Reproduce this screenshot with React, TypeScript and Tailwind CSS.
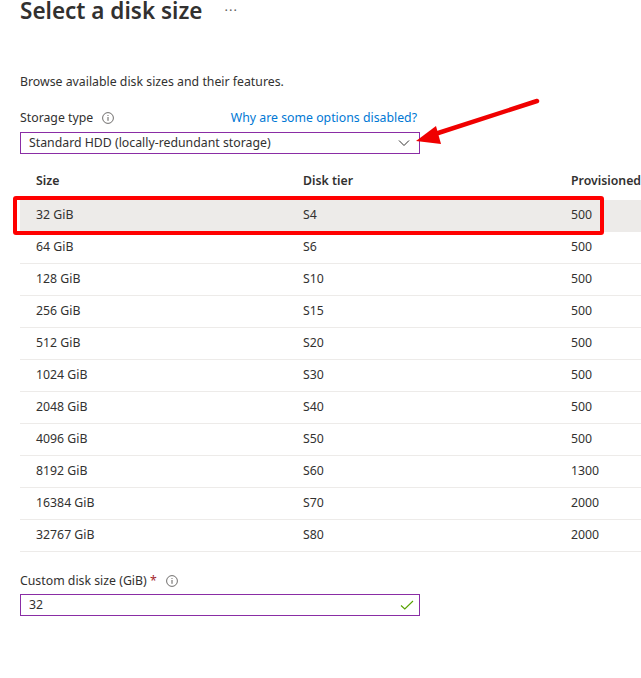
import React from 'react';

const rows = [
  { size: '32 GiB', tier: 'S4', iops: '500' },
  { size: '64 GiB', tier: 'S6', iops: '500' },
  { size: '128 GiB', tier: 'S10', iops: '500' },
  { size: '256 GiB', tier: 'S15', iops: '500' },
  { size: '512 GiB', tier: 'S20', iops: '500' },
  { size: '1024 GiB', tier: 'S30', iops: '500' },
  { size: '2048 GiB', tier: 'S40', iops: '500' },
  { size: '4096 GiB', tier: 'S50', iops: '500' },
  { size: '8192 GiB', tier: 'S60', iops: '1300' },
  { size: '16384 GiB', tier: 'S70', iops: '2000' },
  { size: '32767 GiB', tier: 'S80', iops: '2000' },
];

const InfoIcon = () => (
  <svg width="12" height="12" viewBox="0 0 12 12" className="text-[#605e5c]">
    <circle cx="6" cy="6" r="5.4" fill="none" stroke="currentColor" strokeWidth="0.9" />
    <line x1="6" y1="5" x2="6" y2="8.8" stroke="currentColor" strokeWidth="1" />
    <circle cx="6" cy="3.5" r="0.6" fill="currentColor" />
  </svg>
);

export default function App() {
  return (
    <div
      className="relative w-[641px] h-[678px] overflow-hidden bg-white text-[#323130] text-[12.3px]"
      style={{ fontFamily: '"Noto Sans", "Open Sans", sans-serif' }}
    >
      <div className="flex items-center pl-[20px] mt-[-1px] h-[24px]">
        <h1 className="text-[22.5px] leading-[24px] font-semibold text-[#323130]">Select a disk size</h1>
        <span className="ml-[22px] text-[13px] text-[#605e5c] tracking-[1px]">···</span>
      </div>

      <p className="pl-[20px] mt-[49px] leading-[20px]">Browse available disk sizes and their features.</p>

      <div className="px-[20px] mt-[17px] w-[440px]">
        <div className="flex items-center justify-between h-[18px]">
          <div className="flex items-center gap-[9px]">
            <span>Storage type</span>
            <InfoIcon />
          </div>
          <span className="text-[#0078d4] pr-[3px]">Why are some options disabled?</span>
        </div>
        <div className="mt-[5px] h-[22px] border border-[#8a2da5] flex items-center justify-between pl-[8px] pr-[9px]">
          <span>Standard HDD (locally-redundant storage)</span>
          <svg width="12" height="8" viewBox="0 0 12 8">
            <path d="M1 1.5 L6 6.5 L11 1.5" fill="none" stroke="#323130" strokeWidth="1" />
          </svg>
        </div>
      </div>

      <div className="ml-[20px] mt-[10px]">
        <div className="flex h-[36px] pb-[2px] items-center font-semibold">
          <div className="w-[283px] shrink-0 pl-[16px]">Size</div>
          <div className="w-[268px] shrink-0">Disk tier</div>
          <div className="whitespace-nowrap shrink-0">Provisioned IOPS</div>
        </div>
        {rows.map((r, i) => (
          <div
            key={r.size}
            className={`flex h-[32px] items-center border-b border-[#edebe9] ${i === 0 ? 'bg-[#edebe9]' : ''}`}
          >
            <div className="w-[283px] shrink-0 pl-[16px]">{r.size}</div>
            <div className="w-[268px] shrink-0">{r.tier}</div>
            <div>{r.iops}</div>
          </div>
        ))}
      </div>

      <div className="px-[20px] mt-[20px] w-[440px]">
        <div className="flex items-center h-[18px] gap-[9px]">
          <span>
            Custom disk size (GiB) <span className="text-[#a4262c]">*</span>
          </span>
          <InfoIcon />
        </div>
        <div className="mt-[4px] h-[22px] border border-[#8a2da5] flex items-center justify-between pl-[8px] pr-[5px]">
          <span>32</span>
          <svg width="14" height="10" viewBox="0 0 14 10">
            <path d="M1 5.5 L4.8 9 L13 1" fill="none" stroke="#57a300" strokeWidth="1.1" />
          </svg>
        </div>
      </div>

      {/* red annotation box */}
      <div className="absolute left-[13px] top-[196px] w-[591px] h-[39px] border-[4px] border-[#ff0000] rounded-[3px]" />

      {/* red arrow */}
      <svg className="absolute left-0 top-0" width="641" height="678" viewBox="0 0 641 678">
        <line x1="537" y1="101" x2="432" y2="135" stroke="#f00000" strokeWidth="4.5" strokeLinecap="round" />
        <polygon points="416,141 436,126 441,144" fill="#f00000" />
      </svg>
    </div>
  );
}
